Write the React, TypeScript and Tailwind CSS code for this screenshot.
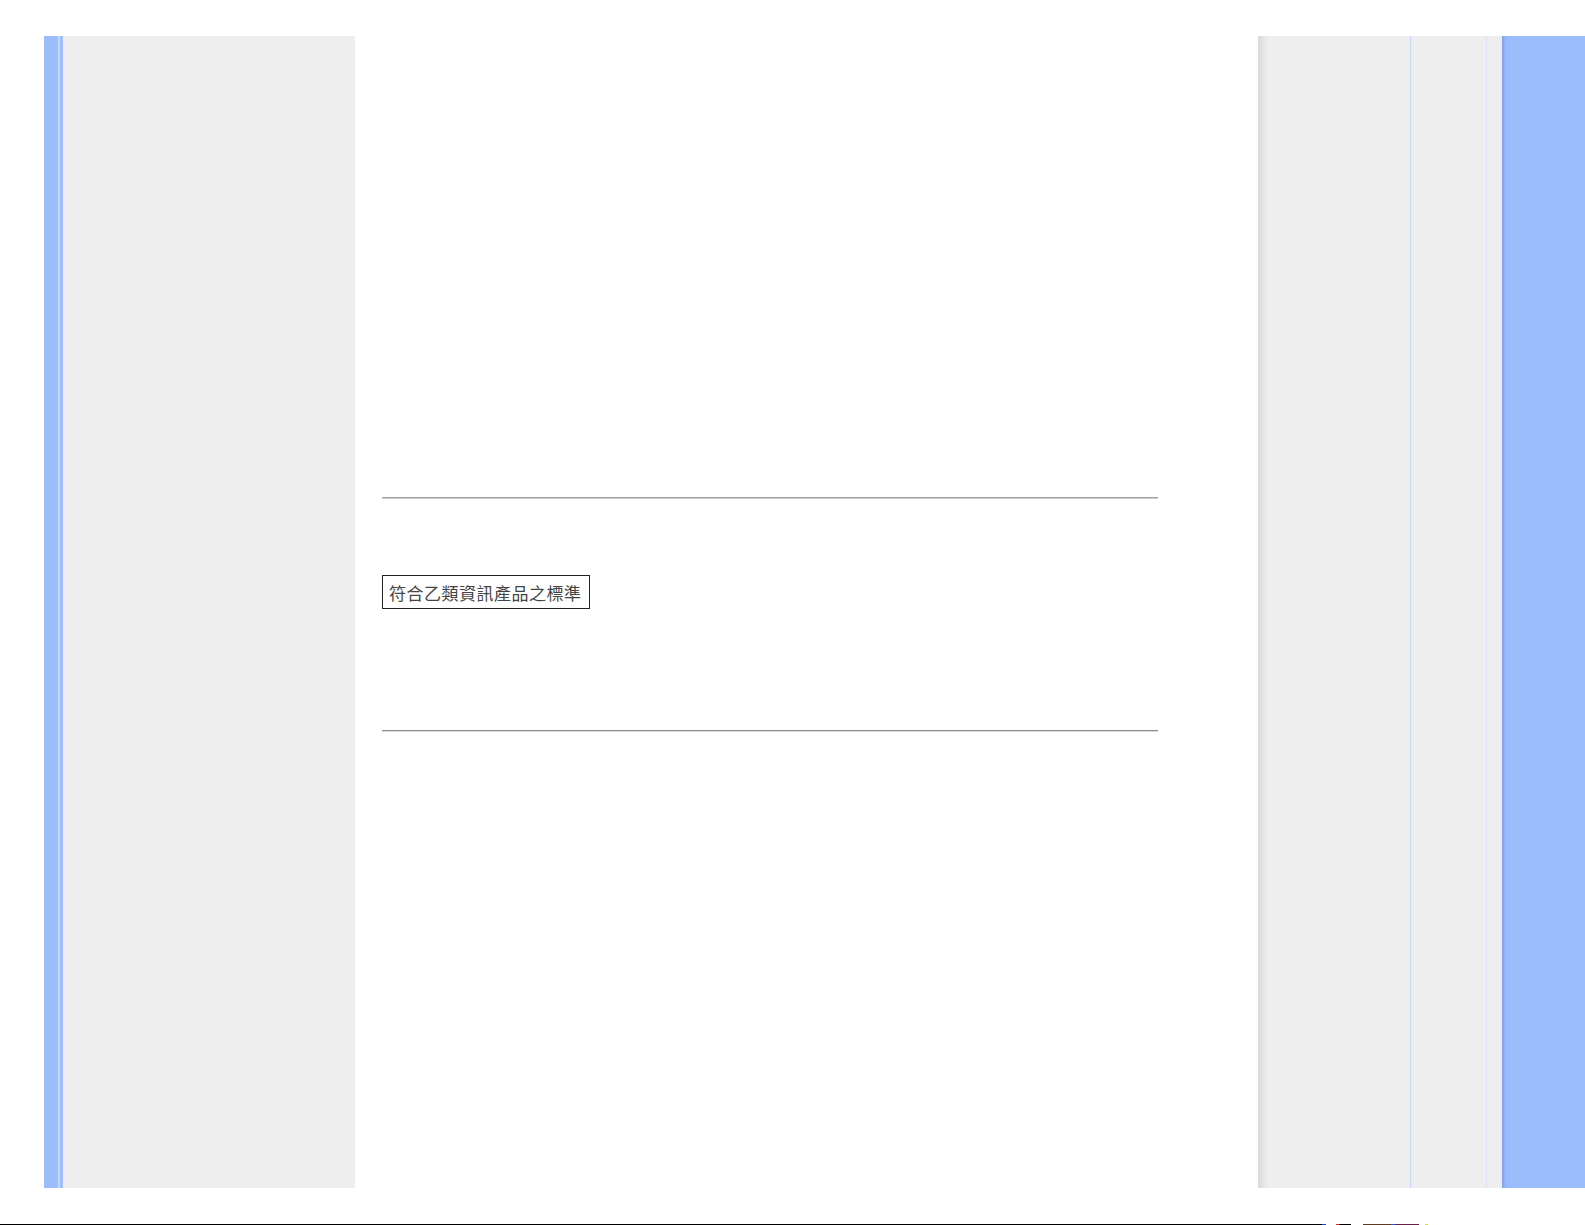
export default function App() {
  return (
    <div className="relative w-[1585px] h-[1225px] bg-white overflow-hidden">
      <div className="flex h-[1152px] mt-[36px] ml-[44px]">
        {/* left blue rail */}
        <div className="flex h-full w-[19px]">
          <div className="w-[13px] bg-[#9bbcfa]" />
          <div className="w-[1px] bg-[#a9bdf2]" />
          <div className="w-[2px] bg-[#c9d3f4]" />
          <div className="w-[3px] bg-[#9cbdfc]" />
        </div>

        {/* left gray column */}
        <div className="w-[292px] h-full bg-[#eeeeee]" />

        {/* content */}
        <div className="w-[903px] h-full bg-white pl-[27px]">
          <div className="w-[776px] mt-[461px] border-t-[1px] border-t-[#a0a0a0] border-b-[1px] border-b-[#cfcfcf]" />
          <div className="mt-[76px] w-[208px] h-[34px] border border-[#222222] flex items-center pl-[6px]">
            <span
              className="text-[17px] leading-none text-[#444444] tracking-[0.5px]"
              style={{ fontFamily: '"Noto Sans CJK TC", "Noto Sans CJK SC", sans-serif' }}
            >
              符合乙類資訊產品之標準
            </span>
          </div>
          <div className="w-[776px] mt-[121px] border-t-[1px] border-t-[#8a8a8a] border-b-[1px] border-b-[#dddddd]" />
        </div>

        {/* right gray columns */}
        <div className="w-[152px] h-full bg-[linear-gradient(to_right,#d9d9d9,#eaeaea_8px,#eeeeee_12px)]" />
        <div className="w-[1px] h-full bg-[#c9d8f8]" />
        <div className="w-[75px] h-full bg-[#eeeeee]" />
        <div className="w-[1px] h-full bg-[#dde3f4]" />
        <div className="w-[15px] h-full bg-[#eeeeee]" />

        {/* right blue rail */}
        <div className="w-[83px] h-full bg-[linear-gradient(to_right,#7d9ef0,#94b6fa_3px,#9bbcfa_5px)]" />
      </div>

      {/* bottom line */}
      <div className="absolute left-0 bottom-0 flex h-[1px] w-full">
        <div className="w-[1322px] bg-black" />
        <div className="w-[4px] bg-[#2244cc]" />
        <div className="w-[10px]" />
        <div className="w-[3px] bg-[#cc3322]" />
        <div className="w-[12px] bg-black" />
        <div className="w-[12px]" />
        <div className="w-[28px] bg-[#5a3a22]" />
        <div className="w-[4px] bg-[#3355cc]" />
        <div className="w-[24px] bg-[#662244]" />
        <div className="w-[6px]" />
        <div className="w-[3px] bg-[#dddd22]" />
      </div>
    </div>
  );
}
